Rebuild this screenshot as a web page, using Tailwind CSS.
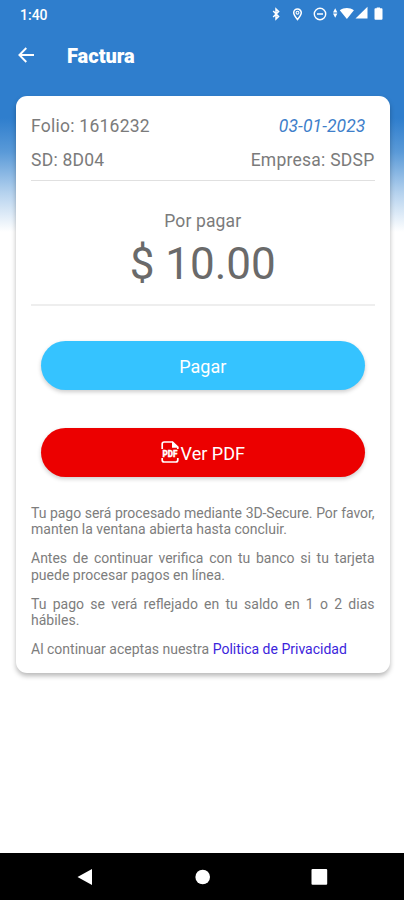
<!DOCTYPE html>
<html lang="es">
<head>
<meta charset="utf-8">
<meta name="viewport" content="width=device-width, initial-scale=1">
<title>Factura</title>
<script src="https://cdn.jsdelivr.net/npm/@tailwindcss/browser@4"></script>
</head>
<body class="bg-white">
<div class="flex h-[900px] w-[404px] flex-col overflow-hidden bg-white bg-[linear-gradient(to_bottom,#2f7ecd_0px,#2f7ecd_118px,#5a9ad8_152px,#b5d2ee_193px,#ffffff_232px)] font-['Roboto',sans-serif] text-[#7b7b7b]">
  <header class="h-24 shrink-0 text-white">
    <div class="flex h-7 items-center justify-between pl-5 pr-[20px]">
      <span class="mt-px text-[14px] font-medium leading-none">1:40</span>
      <svg class="h-4 w-[114px]" viewBox="0 0 114 16" fill="none" stroke="#fff">
        <path d="M3.200 5 8.600 10.400 6 13V3l2.600 2.600L3.200 11" stroke-width="1.500"/>
        <path d="M27.500 13.500c-2.400-2.900-3.800-4.700-3.800-6.700a3.800 3.800 0 0 1 7.600 0c0 2-1.400 3.800-3.800 6.700z" stroke-width="1.500"/>
        <circle cx="27.500" cy="6.700" r="1.400" stroke-width="1.100"/>
        <circle cx="50" cy="8" r="5.700" stroke-width="1.400"/>
        <path d="M47 8h6" stroke-width="1.500"/>
        <path d="M63 6.400 65.200 2.300l2.200 4.100zM63 7.600h4.400l-2.200 4.100z" fill="#fff" stroke="none"/>
        <path d="M69.800 4.200c4.200-3 9.900-3 14.100 0L76.900 13z" fill="#fff" stroke="none"/>
        <path d="M85.500 12.500 97.500 .800v11.700z" fill="#fff" stroke="none"/>
        <path d="M106.700 2.300V1.600h3.300v.7h1.600q.9 0 .9.900v9.600q0 .9-.9.900h-6.200q-.9 0-.9-.9V3.200q0-.9.900-.9z" fill="#fff" stroke="none"/>
      </svg>
    </div>
    <div class="flex h-[54px] items-center pl-[18px]">
      <svg class="h-4 w-4" viewBox="0 0 16 16" fill="none" stroke="#fff" stroke-width="1.900"><path d="M16 8H1.600M8.300 1 1.400 8l6.900 7"/></svg>
      <h1 class="ml-[33px] mt-px text-[20px] font-black leading-none">Factura</h1>
    </div>
  </header>
  <main class="ml-[15.500px] h-[577px] w-[374.500px] shrink-0 rounded-[11px] bg-white px-[15.500px] shadow-[0_3px_5px_rgba(0,0,0,0.28)]">
    <section class="flex h-[85px] flex-col border-b border-[#e0e0e0] pt-[13px] text-[17.500px] leading-[34px] tracking-[0.250px]">
      <div class="flex justify-between pr-[9px]"><span>Folio: 1616232</span><span class="italic tracking-[0.100px] text-[#3f7fca]">03-01-2023</span></div>
      <div class="flex justify-between"><span>SD: 8D04</span><span>Empresa: SDSP</span></div>
    </section>
    <section class="flex h-[125px] flex-col items-center border-b-2 border-[#eeeeee] pt-[28px]">
      <p class="text-[17.500px] leading-6 tracking-[0.150px]">Por pagar</p>
      <p class="mt-px text-[44px] leading-[60px] text-[#6a6a6a]">$ 10.00</p>
    </section>
    <div class="flex flex-col gap-[38px] px-[10px] pt-[35px] text-[18px] text-white">
      <button class="h-[49px] rounded-full bg-[#35c3ff] pt-0.5 shadow-[0_2px_4px_rgba(0,0,0,0.2)]">Pagar</button>
      <button class="flex h-[49px] items-center justify-center rounded-full bg-[#ec0000] pt-0.5 shadow-[0_2px_4px_rgba(0,0,0,0.2)]">
        <svg class="mb-1 mr-0.5 h-[22px] w-[18px]" viewBox="0 0 18 22" fill="none" stroke="#fff">
          <path d="M1.200 8V3Q1.200 1 3.200 1H11.500L16.800 6V8M1.200 17V19Q1.200 21 3.200 21H14.800Q16.800 21 16.800 19V17" stroke-width="1.700"/>
          <path d="M11 .5 17.500 6.700H11z" fill="#fff" stroke="none"/>
          <text x="1.400" y="15.700" textLength="15" lengthAdjust="spacingAndGlyphs" font-size="8.500" font-weight="900" fill="#fff" stroke-width=".3">PDF</text>
        </svg>
        <span>Ver PDF</span>
      </button>
    </div>
    <div class="flex flex-col gap-[12.500px] pt-[28px] text-justify text-[14px] leading-[16.400px] text-[#7d7d7d]">
      <p class="tracking-[-0.060px] [word-spacing:-0.500px]">Tu pago será procesado mediante 3D-Secure. Por favor, <span class="tracking-normal [word-spacing:normal]">manten la ventana abierta hasta concluir.</span></p>
      <p>Antes de continuar verifica con tu banco si tu tarjeta puede procesar pagos en línea.</p>
      <p>Tu pago se verá reflejado en tu saldo en 1 o 2 dias hábiles.</p>
      <p>Al continuar aceptas nuestra <a class="text-[#3c24dc]">Politica de Privacidad</a></p>
    </div>
  </main>
  <nav class="mt-auto h-[47px] shrink-0 bg-black">
    <svg class="h-[47px] w-[404px]" viewBox="0 0 404 47" fill="#fff"><path d="M77.500 24 92 16v16z"/><circle cx="202.700" cy="24" r="7.300"/><rect x="311.500" y="16" width="15.700" height="15.700" rx="1"/></svg>
  </nav>
</div>
</body>
</html>
